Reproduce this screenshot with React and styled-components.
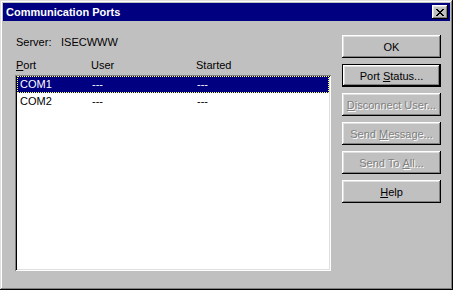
import React from "react";
import styled, { createGlobalStyle } from "styled-components";

const GlobalStyle = createGlobalStyle`
  html, body {
    margin: 0;
    padding: 0;
    background: #c0c0c0;
  }
  body {
    font-family: "Liberation Sans", Arial, sans-serif;
    font-size: 11px;
  }
`;

const raised = `
  box-shadow: inset -1px -1px #000, inset 1px 1px #fff,
    inset -2px -2px #808080, inset 2px 2px #dfdfdf;
`;

const Window = styled.div`
  width: 453px;
  height: 290px;
  box-sizing: border-box;
  padding: 3px;
  background: #c0c0c0;
  box-shadow: inset -1px -1px #000, inset 1px 1px #dfdfdf,
    inset -2px -2px #808080, inset 2px 2px #fff;
  display: flex;
  flex-direction: column;
`;

const TitleBar = styled.div`
  height: 18px;
  background: #000080;
  display: flex;
  align-items: center;
  justify-content: space-between;
  padding: 0 2px 0 3px;
`;

const Title = styled.span`
  color: #fff;
  font-weight: bold;
  font-size: 11px;
  line-height: 13px;
`;

const CloseButton = styled.div`
  width: 16px;
  height: 14px;
  background: #c0c0c0;
  ${raised}
  display: flex;
  align-items: center;
  justify-content: center;
`;

const Content = styled.div`
  display: flex;
  padding: 14px 0 0 12px;
  gap: 11px;
`;

const LeftColumn = styled.div`
  width: 316px;
  display: flex;
  flex-direction: column;
`;

const ServerRow = styled.div`
  display: flex;
  margin-top: 1px;
  padding-left: 1px;
  line-height: 13px;
  color: #000;
`;

const ServerLabel = styled.span`
  width: 45px;
`;

const HeaderRow = styled.div`
  display: flex;
  margin-top: 10px;
  padding-left: 1px;
  line-height: 13px;
`;

const Cell = styled.span`
  width: ${(p) => p.$w}px;
  flex: none;
  white-space: nowrap;
`;

const ListBox = styled.div`
  margin-top: 3px;
  height: 196px;
  box-sizing: border-box;
  background: #fff;
  padding: 1px 2px 2px 2px;
  box-shadow: inset 1px 1px #808080, inset -1px -1px #fff,
    inset 2px 2px #000, inset -2px -2px #dfdfdf;
`;

const Row = styled.div`
  display: flex;
  height: 17px;
  line-height: 17px;
  box-sizing: border-box;
  padding-left: 3px;
  background: ${(p) => (p.$selected ? "#000080" : "transparent")};
  color: ${(p) => (p.$selected ? "#fff" : "#000")};
  outline: ${(p) => (p.$selected ? "1px dotted #ffff60" : "none")};
  outline-offset: -1px;
`;

const ButtonColumn = styled.div`
  width: 99px;
  display: flex;
  flex-direction: column;
  gap: 6px;
`;

const Button = styled.div`
  height: 23px;
  box-sizing: border-box;
  background: #c0c0c0;
  display: flex;
  align-items: center;
  justify-content: center;
  font-size: 11px;
  color: ${(p) => (p.$disabled ? "#808080" : "#000")};
  text-shadow: ${(p) => (p.$disabled ? "1px 1px #fff" : "none")};
  box-shadow: ${(p) =>
    p.$default
      ? "inset 0 0 0 1px #000, inset -2px -2px #000, inset 2px 2px #fff, inset -3px -3px #808080, inset 3px 3px #dfdfdf"
      : "inset -1px -1px #000, inset 1px 1px #fff, inset -2px -2px #808080, inset 2px 2px #dfdfdf"};
`;

const Key = styled.u`
  text-decoration-thickness: 1px;
  text-underline-offset: 1px;
`;

const ports = [
  { port: "COM1", user: "---", started: "---", selected: true },
  { port: "COM2", user: "---", started: "---" },
];

export default function App() {
  return (
    <>
      <GlobalStyle />
      <Window>
        <TitleBar>
          <Title>Communication Ports</Title>
          <CloseButton>
            <svg width="8" height="7" viewBox="0 0 8 7">
              <path
                d="M0 0h2v1h1v1h2V1h1V0h2v1H7v1H6v1H5v1h1v1h1v1h1v1H6V6H5V5H3v1H2v1H0V6h1V5h1V4h1V3H2V2H1V1H0z"
                fill="#000"
              />
            </svg>
          </CloseButton>
        </TitleBar>
        <Content>
          <LeftColumn>
            <ServerRow>
              <ServerLabel>Server:</ServerLabel>
              <span>ISECWWW</span>
            </ServerRow>
            <HeaderRow>
              <Cell $w={75}>
                <Key>P</Key>ort
              </Cell>
              <Cell $w={105}>User</Cell>
              <Cell $w={80}>Started</Cell>
            </HeaderRow>
            <ListBox>
              {ports.map((p) => (
                <Row key={p.port} $selected={p.selected}>
                  <Cell $w={72}>{p.port}</Cell>
                  <Cell $w={105}>{p.user}</Cell>
                  <Cell $w={80}>{p.started}</Cell>
                </Row>
              ))}
            </ListBox>
          </LeftColumn>
          <ButtonColumn>
            <Button>OK</Button>
            <Button $default>
              Port&nbsp;<Key>S</Key>tatus...
            </Button>
            <Button $disabled>
              <Key>D</Key>isconnect User...
            </Button>
            <Button $disabled>
              Send&nbsp;<Key>M</Key>essage...
            </Button>
            <Button $disabled>
              Send To&nbsp;<Key>A</Key>ll...
            </Button>
            <Button>
              <Key>H</Key>elp
            </Button>
          </ButtonColumn>
        </Content>
      </Window>
    </>
  );
}
